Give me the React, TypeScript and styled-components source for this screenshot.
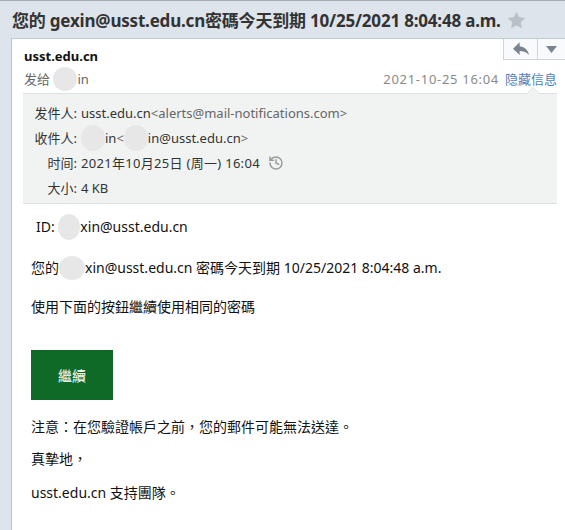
import React from "react";
import styled, { createGlobalStyle } from "styled-components";
import { History } from "lucide-react";

const GlobalStyle = createGlobalStyle`
  html, body { margin: 0; padding: 0; }
  body {
    background: #dee4eb;
    font-family: "Noto Sans", "Noto Sans CJK SC", sans-serif;
    -webkit-font-smoothing: antialiased;
  }
`;

const Page = styled.div`
  width: 565px;
  height: 530px;
  overflow: hidden;
  display: flex;
  flex-direction: column;
  border-top: 1px solid #a3aeba;
  box-sizing: border-box;
`;

const TitleBar = styled.div`
  height: 37px;
  display: flex;
  align-items: center;
  gap: 6px;
  padding-left: 12px;
  box-sizing: border-box;
`;

const Title = styled.h1`
  margin: 0;
  font-size: 17px;
  font-weight: 700;
  color: #333;
  white-space: nowrap;
  letter-spacing: -0.2px;
`;

const Card = styled.div`
  flex: 1;
  margin-left: 11px;
  background: #fff;
  border-left: 1px solid #b8c1cb;
  border-top: 1px solid #c3cbd3;
  display: flex;
  flex-direction: column;
`;

const Header = styled.div`
  padding: 0 8px 0 11px;
`;

const HeaderTop = styled.div`
  display: flex;
  justify-content: space-between;
  align-items: flex-start;
`;

const SenderName = styled.div`
  padding: 8px 0 0 1px;
  line-height: 18px;
  height: 18px;
  margin-bottom: 5px;
  font-size: 13px;
  font-weight: 700;
  color: #111;
`;

const ButtonGroup = styled.div`
  display: flex;
  margin-right: -8px;
  border-left: 1px solid #cfd5db;
  border-bottom: 1px solid #cfd5db;
  background: #f9fafb;
`;

const IconButton = styled.div<{ $w: number }>`
  width: ${(p) => p.$w}px;
  height: 20px;
  display: flex;
  align-items: center;
  justify-content: center;
  & + & {
    border-left: 1px solid #cfd5db;
  }
`;

const MetaRow = styled.div`
  display: flex;
  justify-content: space-between;
  align-items: center;
  height: 18px;
  line-height: 18px;
  padding-left: 1px;
  font-size: 13px;
  color: #666;
`;

const Recipient = styled.div`
  display: flex;
  align-items: center;
`;

const MetaRight = styled.div`
  display: flex;
  gap: 6px;
  color: #8a8a8a;
`;

const DateText = styled.span`
  letter-spacing: 0.7px;
`;

const HideLink = styled.a`
  color: #4f7fbc;
  text-decoration: none;
`;

const Blur = styled.span<{ $w: number; $h: number }>`
  display: inline-block;
  width: ${(p) => p.$w}px;
  height: ${(p) => p.$h}px;
  margin: -4px 0;
  border-radius: 50%;
  background: #e7e7e7;
  flex: none;
`;

const Details = styled.div`
  position: relative;
  margin-top: 5px;
  background: #f1f3f3;
  border-top: 1px solid #dde1e1;
  border-bottom: 1px solid #dde1e1;
  padding: 6px 0 3px 6px;
  display: grid;
  grid-template-columns: 48px 1fr;
  grid-auto-rows: 25px;
  column-gap: 4px;
  align-items: center;
  font-size: 13px;
  &::before {
    content: "";
    position: absolute;
    top: -7px;
    right: 17px;
    border: 7px solid transparent;
    border-top: 0;
    border-bottom-color: #dde1e1;
  }
  &::after {
    content: "";
    position: absolute;
    top: -6px;
    right: 18px;
    border: 6px solid transparent;
    border-top: 0;
    border-bottom-color: #f1f3f3;
  }
`;

const Label = styled.div`
  text-align: right;
  color: #333;
  white-space: nowrap;
`;

const Value = styled.div`
  display: flex;
  align-items: center;
  color: #333;
  white-space: nowrap;
`;

const TimeValue = styled(Value)`
  letter-spacing: 0.3px;
`;

const Muted = styled.span`
  color: #666;
`;

const ClockIcon = styled(History)`
  margin-left: 8px;
  color: #9a9a9a;
`;

const Body = styled.div`
  padding: 0 0 0 19px;
  display: flex;
  flex-direction: column;
  align-items: flex-start;
  font-family: "Noto Sans", "Noto Sans CJK TC", sans-serif;
  font-size: 14px;
  color: #111;
`;

const Para = styled.p<{ $top: number; $indent?: number }>`
  margin: ${(p) => p.$top}px 0 0 ${(p) => p.$indent ?? 0}px;
  height: 20px;
  line-height: 20px;
  display: flex;
  align-items: center;
  white-space: nowrap;
`;

const ContinueButton = styled.a`
  margin-top: 33px;
  width: 82px;
  height: 50px;
  background: #0f6a27;
  color: #fff;
  display: flex;
  align-items: center;
  justify-content: center;
  text-decoration: none;
  font-size: 14px;
`;

const Star = () => (
  <svg width="19" height="18" viewBox="0 0 24 23">
    <path
      d="M12 0.8l3.4 7.2 7.8 1-5.7 5.4 1.4 7.8L12 18.4l-6.9 3.8 1.4-7.8L0.8 9l7.8-1z"
      fill="#b9c0c8"
    />
  </svg>
);

const ReplyIcon = () => (
  <svg width="16" height="14" viewBox="0 0 24 20">
    <path d="M10 6V0L0 9.5 10 19v-6.1c6 0 10.5 1.9 14 6.1-1.5-6.5-5.5-12-14-13z" fill="#7a8491" />
  </svg>
);

const CaretIcon = () => (
  <svg width="11" height="7" viewBox="0 0 11 7">
    <path d="M0 0h11L5.5 7z" fill="#7a8491" />
  </svg>
);

export default function App() {
  return (
    <>
      <GlobalStyle />
      <Page>
        <TitleBar>
          <Title>您的 gexin@usst.edu.cn密碼今天到期 10/25/2021 8:04:48 a.m.</Title>
          <Star />
        </TitleBar>
        <Card>
          <Header>
            <HeaderTop>
              <SenderName>usst.edu.cn</SenderName>
              <ButtonGroup>
                <IconButton $w={33}>
                  <ReplyIcon />
                </IconButton>
                <IconButton $w={27}>
                  <CaretIcon />
                </IconButton>
              </ButtonGroup>
            </HeaderTop>
            <MetaRow>
              <Recipient>
                发给&nbsp;
                <Blur $w={24} $h={24} />
                in
              </Recipient>
              <MetaRight>
                <DateText>2021-10-25 16:04</DateText>
                <HideLink href="#">隐藏信息</HideLink>
              </MetaRight>
            </MetaRow>
          </Header>
          <Header>
            <Details>
              <Label>发件人:</Label>
              <Value>
                usst.edu.cn<Muted>&lt;alerts@mail-notifications.com&gt;</Muted>
              </Value>
              <Label>收件人:</Label>
              <Value>
                <Blur $w={24} $h={26} />
                in<Muted>&lt;</Muted>
                <Blur $w={24} $h={26} />
                in@usst.edu.cn<Muted>&gt;</Muted>
              </Value>
              <Label>时间:</Label>
              <TimeValue>
                2021年10月25日 (周一) 16:04
                <ClockIcon size={16} strokeWidth={2.2} />
              </TimeValue>
              <Label>大小:</Label>
              <Value>4 KB</Value>
            </Details>
          </Header>
          <Body>
            <Para $top={13} $indent={5}>
              ID:&nbsp;
              <Blur $w={22} $h={26} />
              xin@usst.edu.cn
            </Para>
            <Para $top={21}>
              您的
              <Blur $w={26} $h={24} />
              xin@usst.edu.cn 密碼今天到期 10/25/2021 8:04:48 a.m.
            </Para>
            <Para $top={19}>使用下面的按鈕繼續使用相同的密碼</Para>
            <ContinueButton href="#">繼續</ContinueButton>
            <Para $top={17}>注意：在您驗證帳戶之前，您的郵件可能無法送達。</Para>
            <Para $top={12}>真摯地，</Para>
            <Para $top={14}>usst.edu.cn 支持團隊。</Para>
          </Body>
        </Card>
      </Page>
    </>
  );
}
